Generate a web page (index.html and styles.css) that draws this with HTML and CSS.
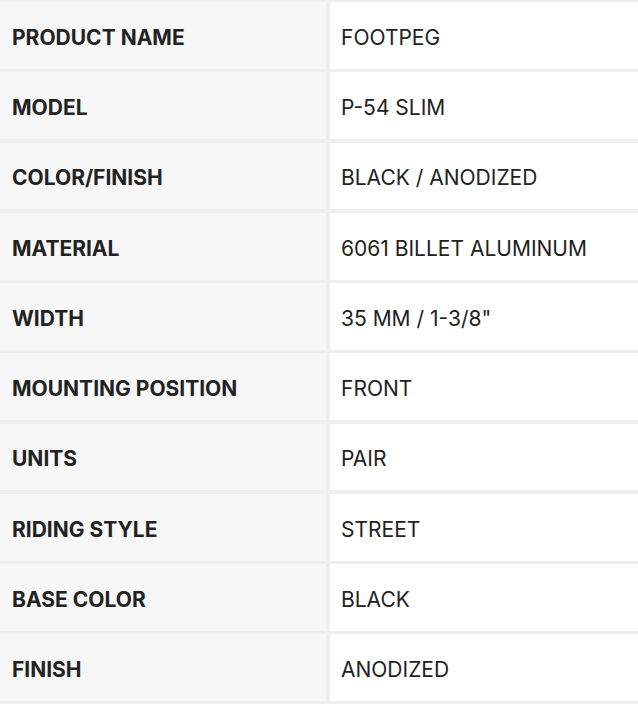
FILE: index.html
```html
<!DOCTYPE html>
<html>
<head>
<meta charset="utf-8">
<link rel="stylesheet" href="styles.css">
</head>
<body>
<div class="specs">
  <div class="row"><div class="label">PRODUCT NAME</div><div class="value">FOOTPEG</div></div>
  <div class="row"><div class="label">MODEL</div><div class="value">P-54 SLIM</div></div>
  <div class="row"><div class="label">COLOR/FINISH</div><div class="value">BLACK / ANODIZED</div></div>
  <div class="row"><div class="label">MATERIAL</div><div class="value">6061 BILLET ALUMINUM</div></div>
  <div class="row"><div class="label">WIDTH</div><div class="value">35 MM / 1-3/8"</div></div>
  <div class="row"><div class="label">MOUNTING POSITION</div><div class="value">FRONT</div></div>
  <div class="row"><div class="label">UNITS</div><div class="value">PAIR</div></div>
  <div class="row"><div class="label">RIDING STYLE</div><div class="value">STREET</div></div>
  <div class="row"><div class="label">BASE COLOR</div><div class="value">BLACK</div></div>
  <div class="row"><div class="label">FINISH</div><div class="value">ANODIZED</div></div>
</div>
</body>
</html>
```
FILE: styles.css
```css
html, body {
  margin: 0;
  padding: 0;
  background: #efefef;
}
.specs {
  width: 638px;
  height: 704px;
  box-sizing: border-box;
  padding: 2px 0 3px 0;
  display: flex;
  flex-direction: column;
  gap: 3.5px;
  background: #efefef;
  font-family: Inter, "Noto Sans", sans-serif;
  font-size: 21px;
  color: #222222;
}
.row {
  flex: 1;
  display: grid;
  grid-template-columns: 326px 1fr;
  column-gap: 4px;
}
.label, .value {
  display: flex;
  align-items: center;
  padding-top: 4px;
}
.label {
  background: #f7f7f7;
  font-weight: 700;
  padding-left: 12px;
}
.value {
  background: #ffffff;
  padding-left: 11px;
}
```
